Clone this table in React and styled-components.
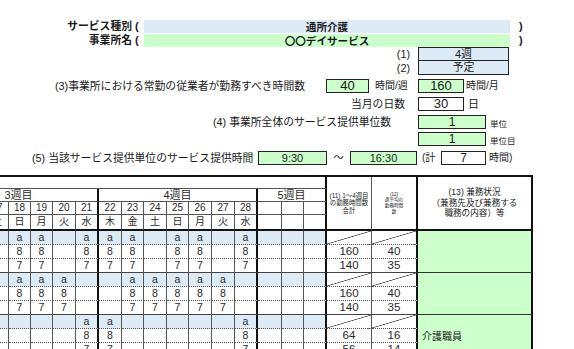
import styled, { createGlobalStyle } from "styled-components";

const GlobalStyle = createGlobalStyle`
  html, body {
    margin: 0;
    padding: 0;
    background: #fff;
  }
  body {
    font-family: "Liberation Sans", "Noto Sans CJK JP", sans-serif;
    color: #1a1a1a;
    overflow: hidden;
  }
`;

const BLUE = "#ddebf7";
const GREEN = "#ccffcc";

const Page = styled.div`
  width: 574px;
  height: 349px;
  overflow: hidden;
  padding-top: 20px;
  box-sizing: border-box;
`;

/* ---------- upper form ---------- */

const Row = styled.div`
  display: flex;
  height: ${({ $h }) => $h || 14}px;
  margin-top: ${({ $mt }) => $mt || 0}px;
  padding-left: ${({ $pl }) => $pl || 0}px;
  font-size: 10.8px;
  line-height: ${({ $h }) => $h || 14}px;
`;

const Label = styled.div`
  flex: none;
  width: ${({ $w }) => ($w ? `${$w}px` : "auto")};
  padding-right: ${({ $pr }) => $pr || 0}px;
  box-sizing: border-box;
  text-align: ${({ $align }) => $align || "left"};
  font-weight: ${({ $bold }) => ($bold ? 700 : 400)};
  white-space: nowrap;
`;

const Paren = styled.div`
  flex: none;
  width: ${({ $w }) => ($w ? `${$w}px` : "auto")};
  padding-left: ${({ $pl }) => $pl || 0}px;
  box-sizing: border-box;
  font-size: 11px;
  font-weight: 700;
`;

const Bar = styled.div`
  flex: none;
  width: ${({ $w }) => $w}px;
  background: ${({ $bg }) => $bg};
  text-align: center;
  font-family: "Noto Sans CJK JP", sans-serif;
  font-size: 10.6px;
  font-weight: 700;
  overflow: hidden;
`;

const Box = styled.div`
  flex: none;
  width: ${({ $w }) => $w}px;
  box-sizing: border-box;
  border: 1px solid #222;
  border-top: ${({ $noTop }) => ($noTop ? "none" : "1px solid #222")};
  background: ${({ $bg }) => $bg || "#fff"};
  text-align: center;
  font-size: ${({ $fs }) => $fs || 11}px;
  line-height: 12px;
`;

const Unit = styled.div`
  flex: none;
  width: ${({ $w }) => ($w ? `${$w}px` : "auto")};
  padding-left: ${({ $pl }) => $pl || 0}px;
  padding-top: ${({ $down }) => $down || 0}px;
  box-sizing: border-box;
  font-size: ${({ $fs }) => $fs || 10}px;
  white-space: nowrap;
`;

const Tilde = styled.div`
  flex: none;
  width: 23px;
  text-align: center;
  font-size: 10px;
`;

/* ---------- schedule table ---------- */

const COLS = [23, 23, 23, 22, 22, 23, 23, 23, 22, 23, 22, 23, 23, 23, 24, 22, 23, 45, 46, 115];

const Grid = styled.div`
  display: grid;
  grid-template-columns: ${COLS.map((c) => `${c}px`).join(" ")};
  grid-template-rows: 12px 13px 13px 16px repeat(9, 14px);
  width: 593px;
  margin: 10px 0 0 -60px;
  border-top: 2px solid #111;
  color: #2a2a2a;
`;

const thin = "1px solid #555";
const thick = "2px solid #111";

const HeadCell = styled.div`
  box-sizing: border-box;
  display: flex;
  align-items: center;
  justify-content: center;
  grid-column: ${({ $col }) => $col || "auto"};
  grid-row: ${({ $row }) => $row || "auto"};
  border-right: ${({ $thick }) => ($thick ? thick : thin)};
  border-bottom: ${({ $heavyBottom }) => ($heavyBottom ? thick : thin)};
  font-size: ${({ $fs }) => $fs || 10}px;
  line-height: 1;
  white-space: nowrap;
  overflow: hidden;
`;

const Note = styled.div`
  font-size: ${({ $fs }) => $fs}px;
  line-height: ${({ $lh }) => $lh}px;
  text-align: center;
  white-space: pre-line;
  color: #222;
`;

const DayCell = styled.div`
  box-sizing: border-box;
  display: flex;
  align-items: center;
  justify-content: center;
  border-right: ${({ $thick }) => ($thick ? thick : thin)};
  border-bottom: ${({ $solid }) => ($solid ? "1px solid #444" : "1px dotted #555")};
  background: ${({ $shade }) => ($shade ? BLUE : "#fff")};
  font-size: 10.5px;
  line-height: 1;
  overflow: hidden;
`;

const SumCell = styled(DayCell)`
  font-size: 11.5px;
  background: ${({ $diag }) =>
    $diag
      ? "linear-gradient(to bottom right, transparent calc(50% - 0.7px), #444 50%, transparent calc(50% + 0.7px))"
      : "#fff"};
`;

const NoteCell = styled.div`
  box-sizing: border-box;
  grid-column: 20;
  grid-row: ${({ $row }) => $row};
  display: flex;
  align-items: center;
  padding-left: 4px;
  background: ${GREEN};
  border-right: ${thick};
  border-bottom: 1px solid #333;
  font-size: 10px;
  color: #1a1a1a;
`;

const DAYS = [15, 16, 17, 18, 19, 20, 21, 22, 23, 24, 25, 26, 27, 28];
const WEEKDAYS = ["木", "金", "土", "日", "月", "火", "水", "木", "金", "土", "日", "月", "火", "水"];
const THICK_AT = [6, 13, 16];

const GROUPS = [
  { days: [15, 16, 18, 19, 21, 22, 23, 25, 26, 28], total: [160, 140], avg: [40, 35], note: "" },
  { days: [16, 17, 18, 19, 20, 23, 24, 25, 26, 27], total: [160, 140], avg: [40, 35], note: "" },
  { days: [15, 21, 22, 28], total: [64, 56], avg: [16, 14], note: "介護職員" },
];

const ROW_TYPES = [
  { mark: "a", shade: true },
  { mark: "8", shade: false },
  { mark: "7", shade: false },
];

function ScheduleTable() {
  const cols = [...DAYS, null, null, null];
  return (
    <Grid>
      <HeadCell $col="1 / span 17" $row="1" $thick />
      <HeadCell $col="18" $row="1 / span 4" $heavyBottom>
        <Note $fs={6.4} $lh={7.5}>{"(11) 1～4週目\nの勤務時間数\n合計"}</Note>
      </HeadCell>
      <HeadCell $col="19" $row="1 / span 4" $heavyBottom $thick>
        <Note $fs={4.6} $lh={5.6}>{"(12)\n週平均の\n勤務時間\n数"}</Note>
      </HeadCell>
      <HeadCell $col="20" $row="1 / span 4" $heavyBottom $thick>
        <Note $fs={8.6} $lh={10.5}>{"(13) 兼務状況\n（兼務先及び兼務する\n職務の内容）等"}</Note>
      </HeadCell>

      <HeadCell $col="1 / span 7" $row="2" $thick $fs={11}>3週目</HeadCell>
      <HeadCell $col="8 / span 7" $row="2" $thick $fs={11}>4週目</HeadCell>
      <HeadCell $col="15 / span 3" $row="2" $thick $fs={11}>5週目</HeadCell>

      {cols.map((d, i) => (
        <HeadCell key={`n${i}`} $col={i + 1} $row="3" $thick={THICK_AT.includes(i)}>
          {d}
        </HeadCell>
      ))}
      {cols.map((d, i) => (
        <HeadCell key={`w${i}`} $col={i + 1} $row="4" $thick={THICK_AT.includes(i)} $heavyBottom>
          {d ? WEEKDAYS[i] : ""}
        </HeadCell>
      ))}

      {GROUPS.map((g, gi) =>
        ROW_TYPES.map((t, ti) => {
          const last = ti === 2;
          return [
            ...cols.map((d, i) => (
              <DayCell
                key={`d${gi}${ti}${i}`}
                $shade={t.shade}
                $solid={last}
                $thick={THICK_AT.includes(i)}
              >
                {d && g.days.includes(d) ? t.mark : ""}
              </DayCell>
            )),
            <SumCell key={`s${gi}${ti}`} $diag={ti === 0} $solid={last}>
              {ti === 0 ? "" : g.total[ti - 1]}
            </SumCell>,
            <SumCell key={`v${gi}${ti}`} $diag={ti === 0} $solid={last} $thick>
              {ti === 0 ? "" : g.avg[ti - 1]}
            </SumCell>,
            ti === 0 ? (
              <NoteCell key={`c${gi}`} $row={`${5 + gi * 3} / span 3`}>
                {g.note}
              </NoteCell>
            ) : null,
          ];
        })
      )}
    </Grid>
  );
}

export default function App() {
  return (
    <>
      <GlobalStyle />
      <Page>
        <Row $h={13}>
          <Label $w={132} $align="right" $bold>サービス種別</Label>
          <Paren $w={12} $pl={3}>(</Paren>
          <Bar $w={366} $bg={BLUE}>通所介護</Bar>
          <Paren $pl={9}>)</Paren>
        </Row>
        <Row $h={13} $mt={1}>
          <Label $w={132} $align="right" $bold>事業所名</Label>
          <Paren $w={12} $pl={3}>(</Paren>
          <Bar $w={366} $bg={GREEN}>〇〇デイサービス</Bar>
          <Paren $pl={9}>)</Paren>
        </Row>
        <Row>
          <Label $w={418} $pr={8} $align="right">(1)</Label>
          <Box $w={91} $bg={BLUE}>4週</Box>
        </Row>
        <Row>
          <Label $w={418} $pr={8} $align="right">(2)</Label>
          <Box $w={91} $bg={BLUE} $noTop>予定</Box>
        </Row>

        <Row $mt={4} $pl={55}>
          <Label $w={271}>(3)事業所における常勤の従業者が勤務すべき時間数</Label>
          <Box $w={43} $bg={GREEN} $fs={13}>40</Box>
          <Unit $w={49} $pl={6}>時間/週</Unit>
          <Box $w={46} $bg={GREEN} $fs={13}>160</Box>
          <Unit $pl={2}>時間/月</Unit>
        </Row>
        <Row $mt={4}>
          <Label $w={418} $pr={13} $align="right">当月の日数</Label>
          <Box $w={46} $fs={13}>30</Box>
          <Unit $pl={4} $fs={11}>日</Unit>
        </Row>
        <Row $mt={4} $pl={213}>
          <Label $w={205}>(4) 事業所全体のサービス提供単位数</Label>
          <Box $w={68} $bg={GREEN} $fs={12}>1</Box>
          <Unit $pl={4} $fs={8.5} $down={2}>単位</Unit>
        </Row>
        <Row $mt={3} $pl={418}>
          <Box $w={68} $bg={GREEN} $fs={12}>1</Box>
          <Unit $pl={4} $fs={8.5} $down={2}>単位目</Unit>
        </Row>
        <Row $mt={5} $pl={32}>
          <Label $w={226}>(5) 当該サービス提供単位のサービス提供時間</Label>
          <Box $w={69} $bg={GREEN}>9:30</Box>
          <Tilde>～</Tilde>
          <Box $w={67} $bg={GREEN}>16:30</Box>
          <Unit $w={24} $pl={5}>(計</Unit>
          <Box $w={45} $fs={12}>7</Box>
          <Unit $pl={3}>時間)</Unit>
        </Row>

        <ScheduleTable />
      </Page>
    </>
  );
}
